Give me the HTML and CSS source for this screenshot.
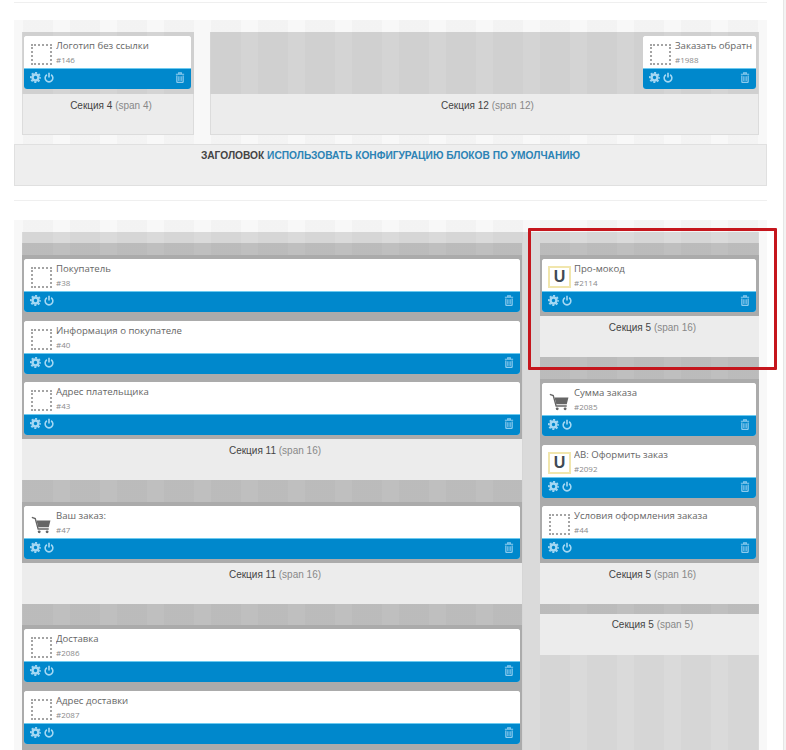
FILE: index.html
```html
<!DOCTYPE html>
<html lang="ru">
<head>
<meta charset="utf-8">
<title>Конфигурация блоков</title>
<link rel="stylesheet" href="styles.css">
</head>
<body>
<svg class="defs" width="0" height="0" aria-hidden="true">
  <symbol id="i-gear" viewBox="0 0 16 16">
    <circle cx="8" cy="8" r="4.3" fill="none" stroke="currentColor" stroke-width="3.6"/>
    <circle cx="8" cy="8" r="6.8" fill="none" stroke="currentColor" stroke-width="2.6" stroke-dasharray="2.9 2.44" stroke-dashoffset="1.45"/>
  </symbol>
  <symbol id="i-power" viewBox="0 0 16 16">
    <path d="M4.6 3.6A6.2 6.2 0 1 0 11.4 3.6" fill="none" stroke="currentColor" stroke-width="2.5"/>
    <path d="M8 .4V8" fill="none" stroke="currentColor" stroke-width="2.6"/>
  </symbol>
  <symbol id="i-trash" viewBox="0 0 14 16">
    <path d="M1 3.2H13M5 3V1.2H9V3" fill="none" stroke="currentColor" stroke-width="1.6"/>
    <path d="M2.4 5V14.2Q2.4 15.2 3.4 15.2H10.6Q11.6 15.2 11.6 14.2V5" fill="none" stroke="currentColor" stroke-width="1.8"/>
    <path d="M5 6.2V13M7 6.2V13M9 6.2V13" fill="none" stroke="currentColor" stroke-width="1.2"/>
  </symbol>
  <symbol id="i-cart" viewBox="0 0 22 20">
    <path d="M.8 1.6L4.6 2.8L7.8 14.4H19.6" fill="none" stroke="currentColor" stroke-width="1.5"/>
    <path d="M6 5H21.5L19.6 12.4H8Z" fill="currentColor"/>
    <circle cx="9" cy="17.6" r="1.6" fill="currentColor"/>
    <circle cx="17.8" cy="17.6" r="1.6" fill="currentColor"/>
  </symbol>
</svg>
<div class="page">
  <main class="main">
    <hr class="rule rule-top">
    <section class="row row-top">
      <div class="sec sec-4">
        <div class="sec-body sec-body-light">
          <article class="widget">
            <div class="w-head"><span class="ph"></span><div class="w-text"><div class="w-title">Логотип без ссылки</div><div class="w-id">#146</div></div></div>
            <div class="w-foot"><svg class="ic ic-gear"><use href="#i-gear"/></svg><svg class="ic ic-power"><use href="#i-power"/></svg><svg class="ic ic-trash"><use href="#i-trash"/></svg></div>
          </article>
        </div>
        <div class="sec-label sec-label-boxed">Секция 4 <span class="muted">(span 4)</span></div>
      </div>
      <div class="sec sec-12">
        <div class="sec-body sec-body-light sec-body-end">
          <article class="widget widget-narrow">
            <div class="w-head"><span class="ph"></span><div class="w-text"><div class="w-title">Заказать обратн</div><div class="w-id">#1988</div></div></div>
            <div class="w-foot"><svg class="ic ic-gear"><use href="#i-gear"/></svg><svg class="ic ic-power"><use href="#i-power"/></svg><svg class="ic ic-trash"><use href="#i-trash"/></svg></div>
          </article>
        </div>
        <div class="sec-label sec-label-boxed">Секция 12 <span class="muted">(span 12)</span></div>
      </div>
    </section>
    <div class="heading"><b>ЗАГОЛОВОК</b> <a href="#">ИСПОЛЬЗОВАТЬ КОНФИГУРАЦИЮ БЛОКОВ ПО УМОЛЧАНИЮ</a></div>
    <hr class="rule rule-mid">
    <section class="row row-main">
      <div class="columns">
        <div class="col">
          <div class="band band-12"></div>
          <div class="sec-body">
            <article class="widget">
              <div class="w-head"><span class="ph"></span><div class="w-text"><div class="w-title">Покупатель</div><div class="w-id">#38</div></div></div>
              <div class="w-foot"><svg class="ic ic-gear"><use href="#i-gear"/></svg><svg class="ic ic-power"><use href="#i-power"/></svg><svg class="ic ic-trash"><use href="#i-trash"/></svg></div>
            </article>
            <article class="widget">
              <div class="w-head"><span class="ph"></span><div class="w-text"><div class="w-title">Информация о покупателе</div><div class="w-id">#40</div></div></div>
              <div class="w-foot"><svg class="ic ic-gear"><use href="#i-gear"/></svg><svg class="ic ic-power"><use href="#i-power"/></svg><svg class="ic ic-trash"><use href="#i-trash"/></svg></div>
            </article>
            <article class="widget">
              <div class="w-head"><span class="ph"></span><div class="w-text"><div class="w-title">Адрес плательщика</div><div class="w-id">#43</div></div></div>
              <div class="w-foot"><svg class="ic ic-gear"><use href="#i-gear"/></svg><svg class="ic ic-power"><use href="#i-power"/></svg><svg class="ic ic-trash"><use href="#i-trash"/></svg></div>
            </article>
          </div>
          <div class="sec-label">Секция 11 <span class="muted">(span 16)</span></div>
          <div class="band band-22"></div>
          <div class="sec-body">
            <article class="widget">
              <div class="w-head"><svg class="cart"><use href="#i-cart"/></svg><div class="w-text"><div class="w-title">Ваш заказ:</div><div class="w-id">#47</div></div></div>
              <div class="w-foot"><svg class="ic ic-gear"><use href="#i-gear"/></svg><svg class="ic ic-power"><use href="#i-power"/></svg><svg class="ic ic-trash"><use href="#i-trash"/></svg></div>
            </article>
          </div>
          <div class="sec-label">Секция 11 <span class="muted">(span 16)</span></div>
          <div class="band band-21"></div>
          <div class="sec-body sec-body-open">
            <article class="widget">
              <div class="w-head"><span class="ph"></span><div class="w-text"><div class="w-title">Доставка</div><div class="w-id">#2086</div></div></div>
              <div class="w-foot"><svg class="ic ic-gear"><use href="#i-gear"/></svg><svg class="ic ic-power"><use href="#i-power"/></svg><svg class="ic ic-trash"><use href="#i-trash"/></svg></div>
            </article>
            <article class="widget">
              <div class="w-head"><span class="ph"></span><div class="w-text"><div class="w-title">Адрес доставки</div><div class="w-id">#2087</div></div></div>
              <div class="w-foot"><svg class="ic ic-gear"><use href="#i-gear"/></svg><svg class="ic ic-power"><use href="#i-power"/></svg><svg class="ic ic-trash"><use href="#i-trash"/></svg></div>
            </article>
          </div>
        </div>
        <div class="col col-side">
          <div class="band band-12"></div>
          <div class="sec-body">
            <article class="widget">
              <div class="w-head"><span class="u-icon">U</span><div class="w-text"><div class="w-title">Про-мокод</div><div class="w-id">#2114</div></div></div>
              <div class="w-foot"><svg class="ic ic-gear"><use href="#i-gear"/></svg><svg class="ic ic-power"><use href="#i-power"/></svg><svg class="ic ic-trash"><use href="#i-trash"/></svg></div>
            </article>
          </div>
          <div class="sec-label">Секция 5 <span class="muted">(span 16)</span></div>
          <div class="band band-22"></div>
          <div class="sec-body">
            <article class="widget">
              <div class="w-head"><svg class="cart"><use href="#i-cart"/></svg><div class="w-text"><div class="w-title">Сумма заказа</div><div class="w-id">#2085</div></div></div>
              <div class="w-foot"><svg class="ic ic-gear"><use href="#i-gear"/></svg><svg class="ic ic-power"><use href="#i-power"/></svg><svg class="ic ic-trash"><use href="#i-trash"/></svg></div>
            </article>
            <article class="widget">
              <div class="w-head"><span class="u-icon">U</span><div class="w-text"><div class="w-title">АВ: Оформить заказ</div><div class="w-id">#2092</div></div></div>
              <div class="w-foot"><svg class="ic ic-gear"><use href="#i-gear"/></svg><svg class="ic ic-power"><use href="#i-power"/></svg><svg class="ic ic-trash"><use href="#i-trash"/></svg></div>
            </article>
            <article class="widget">
              <div class="w-head"><span class="ph"></span><div class="w-text"><div class="w-title">Условия оформления заказа</div><div class="w-id">#44</div></div></div>
              <div class="w-foot"><svg class="ic ic-gear"><use href="#i-gear"/></svg><svg class="ic ic-power"><use href="#i-power"/></svg><svg class="ic ic-trash"><use href="#i-trash"/></svg></div>
            </article>
          </div>
          <div class="sec-label">Секция 5 <span class="muted">(span 16)</span></div>
          <div class="band band-10"></div>
          <div class="sec-label sec-label-last">Секция 5 <span class="muted">(span 5)</span></div>
        </div>
      </div>
    </section>
    <div class="callout"></div>
  </main>
  <div class="scroll-edge"></div>
</div>
</body>
</html>
```
FILE: styles.css
```css
* { box-sizing: border-box; }

html, body {
  margin: 0;
  height: 750px;
  overflow: hidden;
  background: #fff;
}

body {
  font-family: "Liberation Sans", Arial, sans-serif;
  font-size: 10px;
  color: #444;
  --stripes: repeating-linear-gradient(90deg,
    rgba(0, 0, 0, .018) 0 6px,
    transparent 6px 23px,
    rgba(0, 0, 0, .018) 23px 47px);
}

.defs { position: absolute; }

.page {
  display: flex;
  height: 750px;
}

.main {
  position: relative;
  width: 783px;
  padding: 2px 16px 0 14px;
}

.scroll-edge {
  width: 3px;
  background: #f3f3f3;
  border-left: 1px solid #e6e6e6;
}

.rule {
  height: 1px;
  border: 0;
  margin: 0;
  background: #efefef;
}
.rule-top { margin-bottom: 17px; }
.rule-mid { margin: 14px 0 19px; }

.row {
  background-color: #f8f8f8;
  background-image: var(--stripes);
  background-attachment: fixed;
}

.row-top {
  display: flex;
  gap: 16px;
  padding: 12px 8px 9px;
}

.row-main {
  padding: 12px 8px 0;
  height: 530px;
}

.sec-4 { width: 172px; flex: none; }
.sec-12 { flex: 1; min-width: 0; }

.columns {
  display: grid;
  grid-template-columns: 500px 219px;
  gap: 18px;
  padding-top: 11px;
  height: 100%;
  background-color: #dadada;
  background-image: var(--stripes);
  background-attachment: fixed;
}

.col { min-width: 0; }
.col-side .sec-body { padding-right: 3px; }

.band {
  background-color: #bfbfbf;
  background-image: var(--stripes);
  background-attachment: fixed;
}
.band-10 { height: 10px; }
.band-12 { height: 12px; }
.band-21 { height: 21px; }
.band-22 { height: 22px; }

.sec-body {
  display: flex;
  flex-direction: column;
  gap: 8.5px;
  padding: 4px 2px;
  background: #ababab;
}
.sec-body-open { padding-bottom: 7px; }
.sec-body-light {
  height: 62px;
  padding: 4px 3px 5px 2px;
  background-color: #d4d4d4;
  background-image: var(--stripes);
  background-attachment: fixed;
}
.sec-body-end { align-items: flex-end; }

.sec-label {
  height: 41px;
  padding: 5px 0 0 6px;
  line-height: 14px;
  text-align: center;
  color: #444;
  background: #ececec;
}
.sec-label-last { padding-top: 4px; }
.sec-label-boxed {
  border: 1px solid #dcdcdc;
  border-top: 0;
}
.muted { color: #888; }

.heading {
  height: 42px;
  padding-top: 4px;
  border: 1px solid #e0e0e0;
  background: #eee;
  font-size: 10.2px;
  line-height: 13px;
  text-align: center;
  color: #444;
}
.heading a {
  font-weight: bold;
  color: #2c83b5;
  text-decoration: none;
}

.widget {
  height: 53px;
  flex: none;
  overflow: hidden;
  border-radius: 3px;
  background: #fff;
}
.widget-narrow { width: 113px; }

.w-head {
  display: flex;
  height: 33px;
  background: #fff;
  border-bottom: 1px solid #6ccaf0;
}

.ph {
  flex: none;
  width: 21px;
  height: 21px;
  margin: 8px 4px 0 7px;
  border: 2px dotted #a4a4a4;
}

.u-icon {
  flex: none;
  width: 23px;
  height: 22px;
  margin: 7px 3px 0 6px;
  border: 2px solid #f1e6ad;
  font-size: 16px;
  font-weight: bold;
  line-height: 18px;
  text-align: center;
  color: #3f4a55;
}

.cart {
  flex: none;
  width: 20px;
  height: 18px;
  margin: 10px 5px 0 7px;
  color: #666;
}

.w-text {
  flex: 1;
  min-width: 0;
  overflow: hidden;
  padding: 3px 5px 0 0;
  font-family: "Open Sans", sans-serif;
}

.w-title {
  font-size: 9.6px;
  line-height: 14px;
  white-space: nowrap;
  color: #666;
}

.w-id {
  font-size: 8px;
  line-height: 14px;
  color: #8a8a8a;
}

.w-foot {
  display: flex;
  align-items: center;
  gap: 3px;
  height: 20px;
  padding: 0 6px 3px 6px;
  background: #0088cc;
  color: #a5d8f3;
}

.ic { display: block; flex: none; }
.ic-gear { width: 11px; height: 11px; }
.ic-power { width: 10px; height: 11px; }
.ic-trash { width: 10px; height: 11px; margin-left: auto; color: #8ccbee; }

.callout {
  position: absolute;
  left: 528px;
  top: 228px;
  width: 249px;
  height: 142px;
  border: 3px solid #c5161d;
  border-radius: 1px;
  pointer-events: none;
}
```
